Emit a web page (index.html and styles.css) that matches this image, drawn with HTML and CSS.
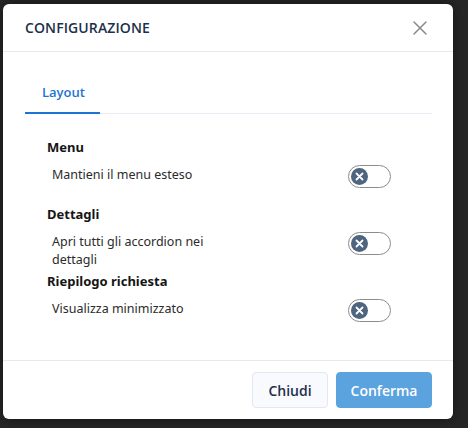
FILE: index.html
```html
<!DOCTYPE html>
<html lang="it">
<head>
<meta charset="utf-8">
<link rel="stylesheet" href="styles.css">
</head>
<body>
<div class="dialog">
  <div class="header">
    <h2 class="title">CONFIGURAZIONE</h2>
    <button class="close" aria-label="Chiudi">
      <svg width="14" height="14" viewBox="0 0 14 14"><path d="M1 1L13 13M13 1L1 13" stroke="#8a8a8a" stroke-width="1.5" stroke-linecap="round" fill="none"/></svg>
    </button>
  </div>
  <div class="body">
    <div class="tabs">
      <div class="tab active">Layout</div>
    </div>
    <div class="sections">
      <div class="section">
        <div class="section-title">Menu</div>
        <div class="row">
          <span class="label">Mantieni il menu esteso</span>
          <span class="toggle"><span class="knob"><svg width="9" height="9" viewBox="0 0 9 9"><path d="M1.5 1.5L7.5 7.5M7.5 1.5L1.5 7.5" stroke="#fff" stroke-width="1.8" stroke-linecap="round"/></svg></span></span>
        </div>
      </div>
      <div class="section">
        <div class="section-title">Dettagli</div>
        <div class="row">
          <span class="label">Apri tutti gli accordion nei dettagli</span>
          <span class="toggle"><span class="knob"><svg width="9" height="9" viewBox="0 0 9 9"><path d="M1.5 1.5L7.5 7.5M7.5 1.5L1.5 7.5" stroke="#fff" stroke-width="1.8" stroke-linecap="round"/></svg></span></span>
        </div>
      </div>
      <div class="section">
        <div class="section-title">Riepilogo richiesta</div>
        <div class="row">
          <span class="label">Visualizza minimizzato</span>
          <span class="toggle"><span class="knob"><svg width="9" height="9" viewBox="0 0 9 9"><path d="M1.5 1.5L7.5 7.5M7.5 1.5L1.5 7.5" stroke="#fff" stroke-width="1.8" stroke-linecap="round"/></svg></span></span>
        </div>
      </div>
    </div>
  </div>
  <div class="footer">
    <button class="btn btn-secondary">Chiudi</button>
    <button class="btn btn-primary">Conferma</button>
  </div>
</div>
</body>
</html>
```

FILE: styles.css
```css
html, body {
  margin: 0;
  padding: 0;
}
body {
  background: #262626;
  font-family: "Noto Sans", "Open Sans", sans-serif;
  width: 468px;
  height: 428px;
  overflow: hidden;
  padding: 4px 0 0 3px;
  box-sizing: border-box;
}
.dialog {
  width: 450px;
  height: 415px;
  background: #fff;
  border-radius: 6px;
  box-shadow: 0 0 12px rgba(0,0,0,0.5);
  display: flex;
  flex-direction: column;
  overflow: hidden;
}
.header {
  height: 47px;
  flex: none;
  border-bottom: 1px solid #e6e9ee;
  display: flex;
  align-items: center;
  justify-content: space-between;
  padding: 0 26px 0 22px;
}
.title {
  margin: 0;
  font-family: "Open Sans", sans-serif;
  font-size: 14px;
  font-weight: 600;
  color: #1d304a;
  letter-spacing: 0.1px;
}
.close {
  border: 0;
  background: none;
  padding: 0;
  width: 14px;
  height: 14px;
  display: flex;
}
.body {
  flex: 1;
  padding: 25px 21px 0 22px;
}
.tabs {
  display: flex;
  border-bottom: 1px solid #e8ebf3;
}
.tab {
  font-family: "Open Sans", sans-serif;
  font-size: 13px;
  font-weight: 600;
  color: #1c74d4;
  padding: 6px 17px 11px 17px;
  width: 41px;
  margin-bottom: -1px;
}
.tab.active {
  border-bottom: 2px solid #1c74d4;
}
.sections {
  padding: 24px 41px 0 22px;
}
.section-title {
  font-size: 13px;
  font-weight: 700;
  line-height: 18px;
  color: #151515;
  margin-bottom: 9px;
}
.row {
  display: flex;
  justify-content: space-between;
  align-items: flex-start;
  padding-left: 5px;
  min-height: 40px;
}
.label {
  font-size: 12.5px;
  line-height: 18px;
  color: #2b2b2b;
  max-width: 165px;
  padding-top: 1px;
}
.toggle {
  width: 43px;
  height: 23px;
  box-sizing: border-box;
  border: 1.5px solid #8c8c8c;
  border-radius: 12px;
  display: flex;
  align-items: center;
  padding-left: 1.5px;
  flex: none;
}
.knob {
  width: 17px;
  height: 17px;
  border-radius: 50%;
  background: #4e6580;
  display: flex;
  align-items: center;
  justify-content: center;
}
.footer {
  flex: none;
  border-top: 1px solid #e6e9ee;
  padding: 11px 21px 11px 0;
  display: flex;
  justify-content: flex-end;
  gap: 8px;
}
.btn {
  font-family: "Open Sans", sans-serif;
  font-size: 14px;
  font-weight: 600;
  height: 36px;
  border-radius: 4px;
  padding: 0;
}
.btn-secondary {
  width: 76px;
  background: #f8fafd;
  border: 1px solid #e3e8f0;
  color: #1d304a;
}
.btn-primary {
  width: 96px;
  background: #5ba3de;
  border: 1px solid #5ba3de;
  color: #fff;
}
```
